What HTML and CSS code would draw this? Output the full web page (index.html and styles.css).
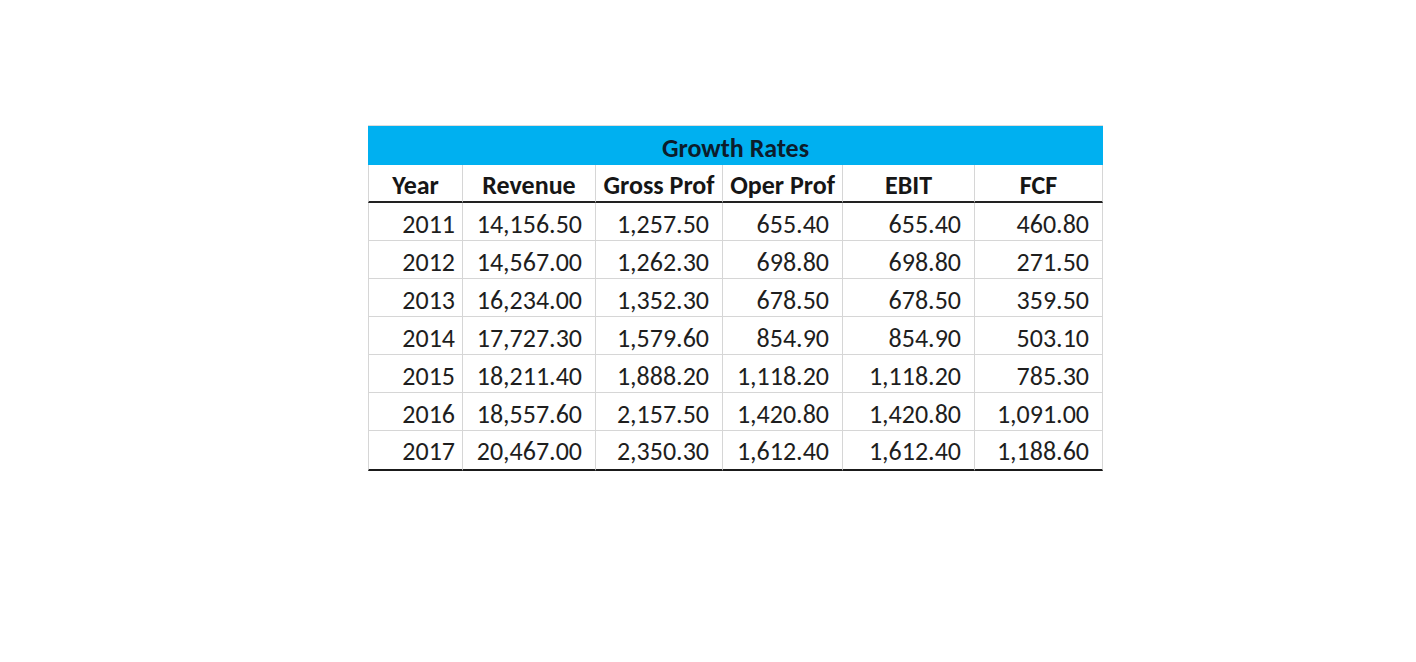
FILE: index.html
```html
<!DOCTYPE html>
<html lang="en">
<head>
<meta charset="utf-8">
<title>Growth Rates</title>
<link rel="stylesheet" href="styles.css">
</head>
<body>
<div class="sheet">
  <div class="grid">
    <div class="title">Growth Rates</div>
    <div class="cell head first">Year</div>
    <div class="cell head">Revenue</div>
    <div class="cell head">Gross Prof</div>
    <div class="cell head">Oper Prof</div>
    <div class="cell head">EBIT</div>
    <div class="cell head">FCF</div>

    <div class="cell first">2011</div><div class="cell">14,156.50</div><div class="cell">1,257.50</div><div class="cell">655.40</div><div class="cell">655.40</div><div class="cell">460.80</div>
    <div class="cell first">2012</div><div class="cell">14,567.00</div><div class="cell">1,262.30</div><div class="cell">698.80</div><div class="cell">698.80</div><div class="cell">271.50</div>
    <div class="cell first">2013</div><div class="cell">16,234.00</div><div class="cell">1,352.30</div><div class="cell">678.50</div><div class="cell">678.50</div><div class="cell">359.50</div>
    <div class="cell first">2014</div><div class="cell">17,727.30</div><div class="cell">1,579.60</div><div class="cell">854.90</div><div class="cell">854.90</div><div class="cell">503.10</div>
    <div class="cell first">2015</div><div class="cell">18,211.40</div><div class="cell">1,888.20</div><div class="cell">1,118.20</div><div class="cell">1,118.20</div><div class="cell">785.30</div>
    <div class="cell first">2016</div><div class="cell">18,557.60</div><div class="cell">2,157.50</div><div class="cell">1,420.80</div><div class="cell">1,420.80</div><div class="cell">1,091.00</div>
    <div class="cell first last">2017</div><div class="cell last">20,467.00</div><div class="cell last">2,350.30</div><div class="cell last">1,612.40</div><div class="cell last">1,612.40</div><div class="cell last">1,188.60</div>
  </div>
</div>
</body>
</html>
```
FILE: styles.css
```css
html, body {
  margin: 0;
  padding: 0;
  background: #ffffff;
}

body {
  font-family: "Carlito", "Open Sans", "Liberation Sans", sans-serif;
  font-size: 26px;
  color: #1e1e1e;
}

.sheet {
  padding: 125px 0 0 368px;
}

.grid {
  display: grid;
  grid-template-columns: 95px 133px 127px 120px 132px 128px;
  width: 735px;
}

.title {
  grid-column: 1 / -1;
  box-sizing: border-box;
  height: 40px;
  border-top: 1px solid #dcdcdc;
  background: #00b0f0;
  color: #0c1c2c;
  font-weight: bold;
  display: flex;
  align-items: center;
  justify-content: center;
  line-height: 30px;
  padding-top: 4px;
}

.cell {
  box-sizing: border-box;
  height: 38px;
  border-right: 1px solid #d6d6d6;
  border-bottom: 1px solid #d6d6d6;
  display: flex;
  align-items: center;
  justify-content: flex-end;
  padding: 4px 13px 0 0;
  line-height: 30px;
  white-space: nowrap;
}

.cell.first {
  border-left: 1px solid #d6d6d6;
  padding-right: 7px;
}

.cell.head {
  justify-content: center;
  padding: 3px 0 0 0;
  font-weight: bold;
  color: #161616;
  border-bottom: 2px solid #222222;
}

.cell.last {
  height: 40px;
  padding-bottom: 2px;
  border-bottom: 2px solid #1a1a1a;
}
```
